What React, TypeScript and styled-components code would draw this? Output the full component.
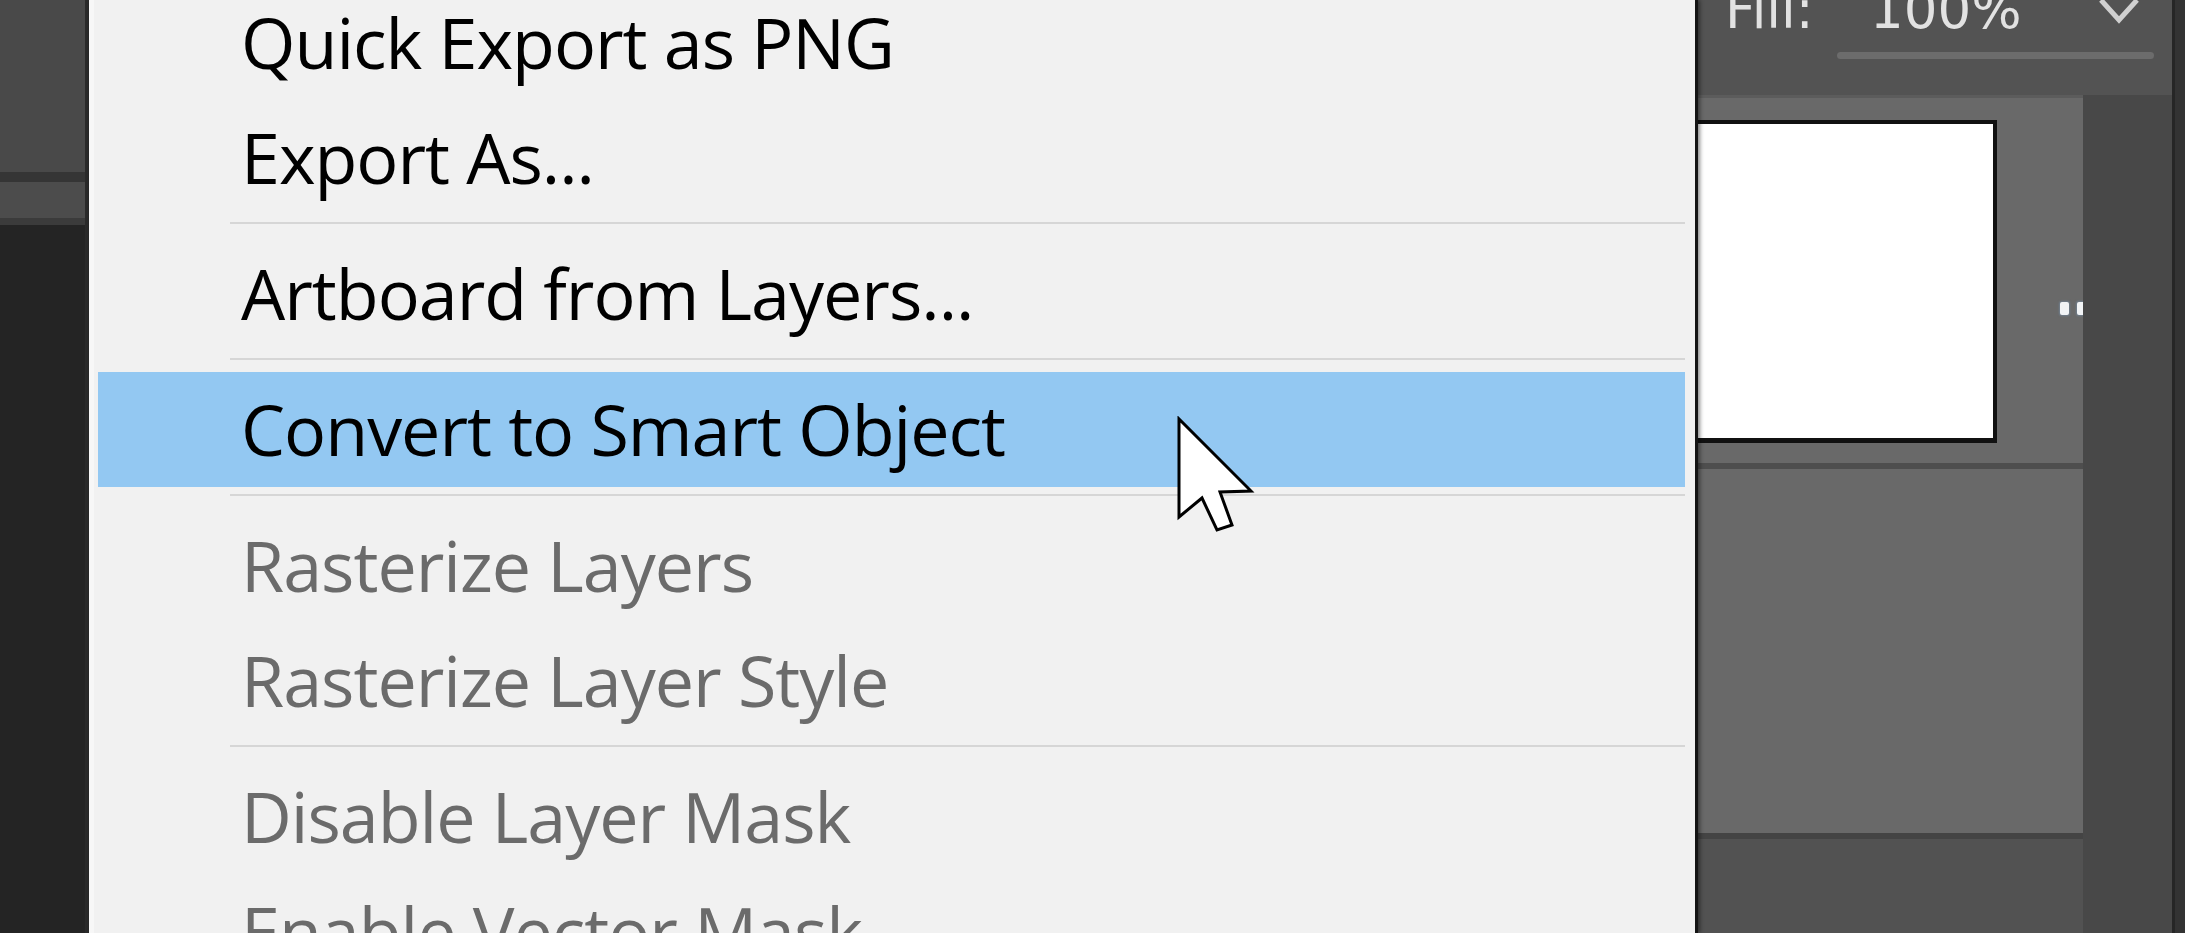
import React from "react";
import styled, { createGlobalStyle } from "styled-components";

const GlobalStyle = createGlobalStyle`
    html, body {
        margin: 0;
        padding: 0;
        background: #242424;
    }
    body {
        font-family: "Open Sans", "Noto Sans", sans-serif;
    }
`

const Screen = styled.div`
    position: relative;
    width: 2185px;
    height: 933px;
    display: flex;
    flex-direction: row;
    overflow: hidden;
    background: #242424;
`

const LeftStrip = styled.div`
    width: 85px;
    flex-shrink: 0;
    display: flex;
    flex-direction: column;
    border-right: 4px solid #2a2a2a;
`

const StripBlock = styled.div<{ $h?: number; $bg: string }>`
    height: ${p => (p.$h ? `${p.$h}px` : "auto")};
    flex: ${p => (p.$h ? "0 0 auto" : "1")};
    background: ${p => p.$bg};
`

const Menu = styled.div`
    width: 1587px;
    flex-shrink: 0;
    background: #f1f1f1;
    border-left: 5px solid #f7f7f7;
    border-right: 3px solid #141414;
    box-shadow: 2px 0 4px rgba(0, 0, 0, 0.45);
    padding: 0 10px 0 4px;
    box-sizing: content-box;
    display: flex;
    flex-direction: column;
    z-index: 1;
`

const MenuList = styled.div`
    margin-top: -15px;
    display: flex;
    flex-direction: column;
`

const Item = styled.div<{ $active?: boolean; $disabled?: boolean }>`
    height: 115px;
    line-height: 115px;
    padding-left: 143px;
    font-size: 70px;
    letter-spacing: -1px;
    white-space: nowrap;
    color: ${p => (p.$disabled ? "#6b6b6b" : "#000000")};
    background: ${p => (p.$active ? "#93c8f2" : "transparent")};
`

const Separator = styled.div`
    height: 21px;
    padding-top: 7px;
    box-sizing: border-box;
    margin-left: 132px;

    &::after {
        content: "";
        display: block;
        height: 2px;
        background: #d6d6d6;
    }
`

const RightPanel = styled.div`
    flex: 1;
    display: flex;
    flex-direction: row;
`

const Content = styled.div`
    flex: 1;
    display: flex;
    flex-direction: column;
`

const Edge = styled.div`
    width: 10px;
    flex-shrink: 0;
    background: #333333;
    border-left: 3px solid #262626;
`

const TopBar = styled.div`
    height: 95px;
    flex-shrink: 0;
    background: #535353;
    display: flex;
    flex-direction: row;
    align-items: flex-start;
    padding-left: 27px;
    color: #e2e2e2;
    font-family: "DejaVu Sans", "Open Sans", sans-serif;
    font-size: 53px;
    line-height: 53px;
`

const FillLabel = styled.div`
    width: 112px;
    margin-top: -17px;
    flex-shrink: 0;
`

const Field = styled.div`
    width: 317px;
    display: flex;
    flex-direction: column;
`

const FieldRow = styled.div`
    height: 34px;
    display: flex;
    flex-direction: row;
    align-items: flex-start;
    justify-content: space-between;
    padding: 0 13px 0 33px;
`

const FieldValue = styled.div`
    margin-top: -17px;
`

const Chevron = styled.svg`
    margin-top: -6px;
    flex-shrink: 0;
`

const Underline = styled.div`
    margin-top: 18px;
    height: 7px;
    border-radius: 4px;
    background: #6c6c6c;
`

const Body = styled.div`
    flex: 1;
    display: flex;
    flex-direction: row;
`

const MainColumn = styled.div`
    width: 385px;
    flex-shrink: 0;
    display: flex;
    flex-direction: column;
`

const Strip = styled.div<{ $h: number; $bg: string }>`
    height: ${p => p.$h}px;
    flex-shrink: 0;
    background: ${p => p.$bg};
`

const LayerPanel = styled.div<{ $h: number }>`
    height: ${p => p.$h}px;
    flex-shrink: 0;
    background: #696969;
    display: flex;
    flex-direction: row;
    align-items: flex-start;
    padding-top: 22px;
    box-sizing: border-box;
`

const Thumb = styled.div`
    width: 295px;
    height: 314px;
    flex-shrink: 0;
    background: #ffffff;
    border-top: 4px solid #111111;
    border-bottom: 5px solid #111111;
    border-right: 4px solid #111111;
`

const Handle = styled.div`
    display: flex;
    gap: 8px;
    margin: 182px 0 0 63px;
    flex-shrink: 0;
`

const HandleDot = styled.span`
    width: 9px;
    height: 13px;
    border-radius: 2px;
    background: #f2f4f6;
    box-shadow: 0 0 2px 1px rgba(120, 150, 180, 0.5);
`

const BottomArea = styled.div`
    flex: 1;
    background: #525252;
`

const SideColumn = styled.div`
    flex: 1;
    background: #484848;
`

const Cursor = styled.svg`
    position: absolute;
    left: 1176px;
    top: 416px;
    z-index: 5;
`

type Entry = { label?: string; disabled?: boolean; active?: boolean; sep?: boolean }

const entries: Entry[] = [
    { label: "Quick Export as PNG" },
    { label: "Export As..." },
    { sep: true },
    { label: "Artboard from Layers..." },
    { sep: true },
    { label: "Convert to Smart Object", active: true },
    { sep: true },
    { label: "Rasterize Layers", disabled: true },
    { label: "Rasterize Layer Style", disabled: true },
    { sep: true },
    { label: "Disable Layer Mask", disabled: true },
    { label: "Enable Vector Mask", disabled: true },
]

export default function App() {
    return (
        <>
            <GlobalStyle />
            <Screen>
                <LeftStrip>
                    <StripBlock $h={172} $bg="#494949" />
                    <StripBlock $h={10} $bg="#353535" />
                    <StripBlock $h={36} $bg="#4c4c4c" />
                    <StripBlock $h={7} $bg="#3b3b3b" />
                    <StripBlock $bg="#242424" />
                </LeftStrip>

                <Menu>
                    <MenuList>
                        {entries.map((e, i) =>
                            e.sep ? (
                                <Separator key={i} />
                            ) : (
                                <Item key={i} $active={e.active} $disabled={e.disabled}>
                                    {e.label}
                                </Item>
                            )
                        )}
                    </MenuList>
                </Menu>

                <RightPanel>
                    <Content>
                        <TopBar>
                            <FillLabel>Fill:</FillLabel>
                            <Field>
                                <FieldRow>
                                    <FieldValue>100%</FieldValue>
                                    <Chevron width="44" height="32" viewBox="0 0 44 32">
                                        <path d="M4 6 L22 26 L40 6" fill="none" stroke="#d0d0d0" strokeWidth="5" />
                                    </Chevron>
                                </FieldRow>
                                <Underline />
                            </Field>
                        </TopBar>
                        <Body>
                            <MainColumn>
                                <Strip $h={3} $bg="#5c5c5c" />
                                <LayerPanel $h={365}>
                                    <Thumb />
                                    <Handle>
                                        <HandleDot />
                                        <HandleDot />
                                    </Handle>
                                </LayerPanel>
                                <Strip $h={6} $bg="#4e4e4e" />
                                <LayerPanel $h={364} />
                                <Strip $h={6} $bg="#444444" />
                                <BottomArea />
                            </MainColumn>
                            <SideColumn />
                        </Body>
                    </Content>
                    <Edge />
                </RightPanel>

                <Cursor width="80" height="118" viewBox="0 0 80 118">
                    <polygon
                        points="3,3 3,101 26,82 41,114 56,109 44,76 75,75"
                        fill="#ffffff"
                        stroke="#000000"
                        strokeWidth="3"
                        strokeLinejoin="miter"
                    />
                </Cursor>
            </Screen>
        </>
    )
}
